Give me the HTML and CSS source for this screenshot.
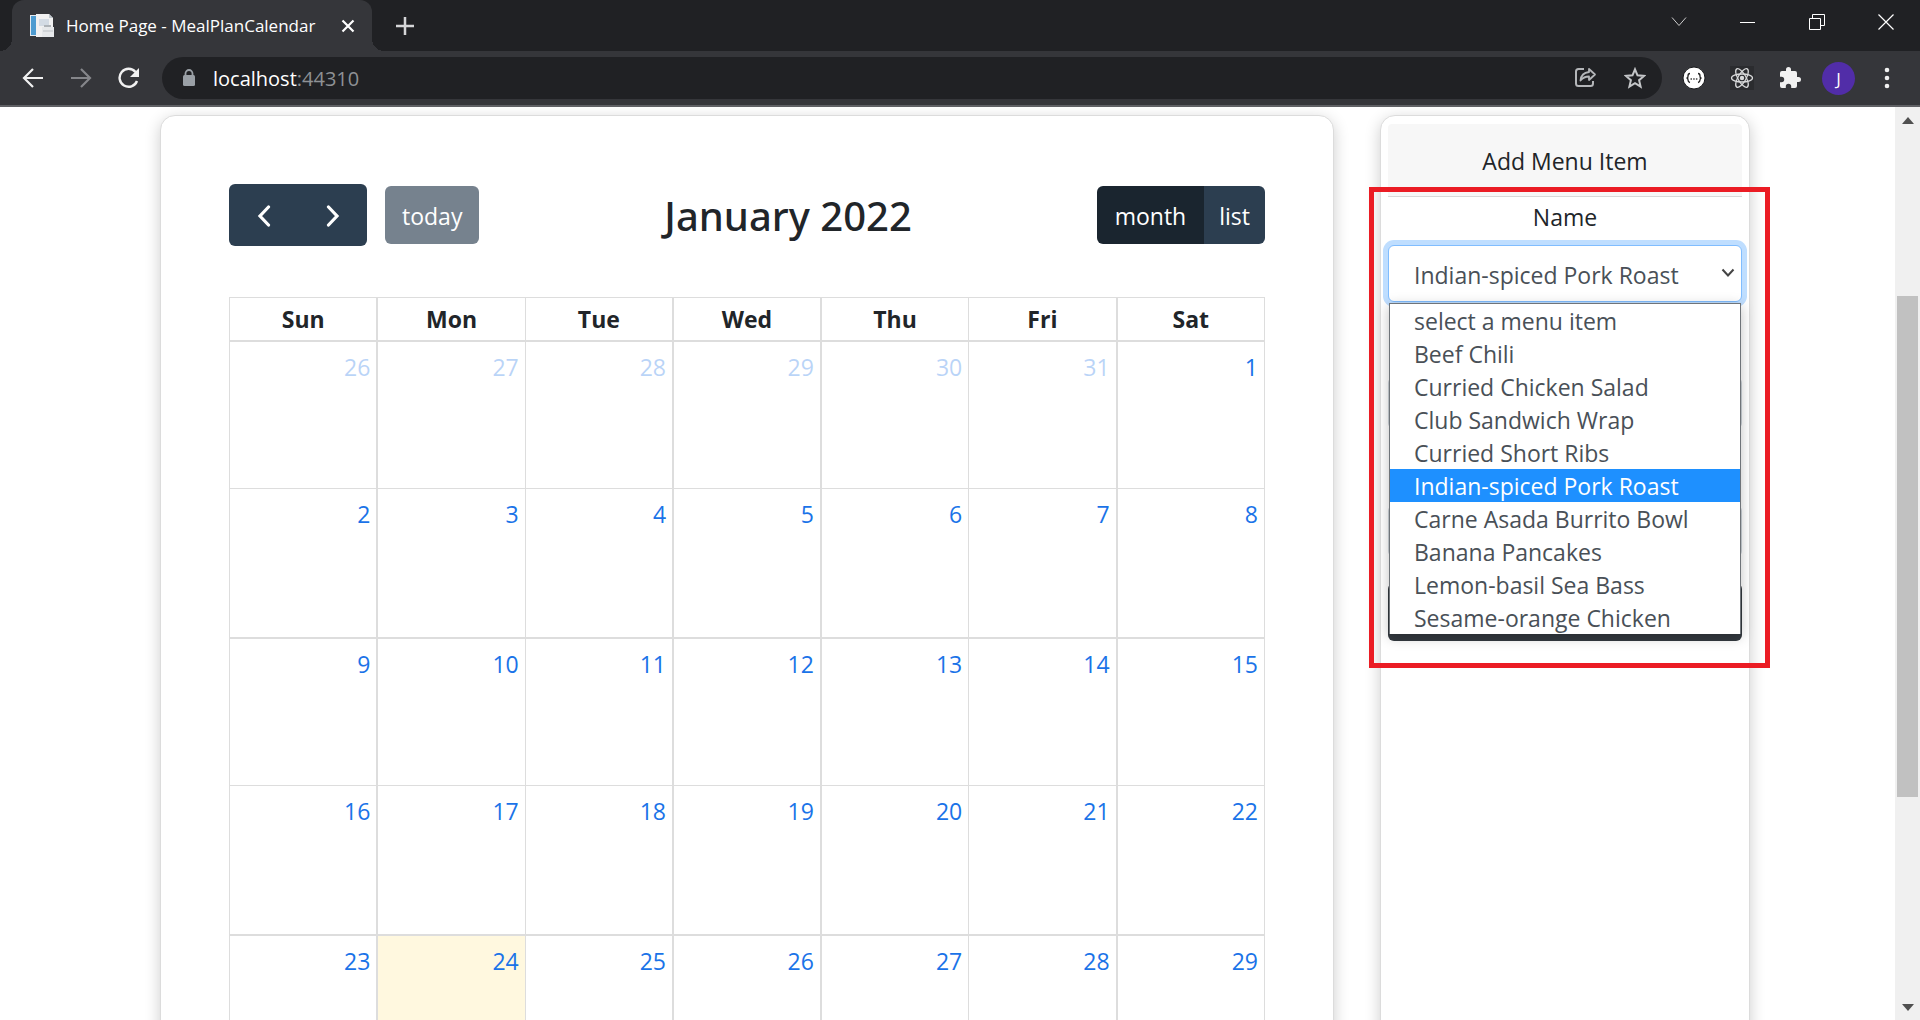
FILE: index.html
```html
<!DOCTYPE html>
<html lang="en">
<head>
<meta charset="utf-8">
<title>Home Page - MealPlanCalendar</title>
<link rel="stylesheet" href="styles.css">
</head>
<body>
<header class="browser">
  <div class="tabstrip">
    <div class="tab">
      <svg class="favicon" width="24" height="24" viewBox="0 0 24 24"><path d="M0 1h9v21H0z" fill="#e4eaf0"/><path d="M1 2h5v19H1z" fill="#4d9bd0"/><path d="M6 0h13l4 4v19H6z" fill="#f1f1f1"/><path d="M9 5h10v7H9z" fill="#d3dbe4"/><path d="M19 0v4h4" fill="#bfc6cc"/><path d="M14 11h7v4h-7z" fill="#aeb3b8"/><path d="M12 13h12v10H12z" fill="#e6e8ea"/><path d="M13 17h10" stroke="#bcc0c4"/></svg>
      <span class="tab-title">Home Page - MealPlanCalendar</span>
      <button class="plain" aria-label="Close tab"><svg width="14" height="14" viewBox="0 0 14 14"><path d="M1.500 1.500l11 11m0-11l-11 11" stroke="#fff" stroke-width="2.200"/></svg></button>
    </div>
    <button class="plain new-tab" aria-label="New tab"><svg width="18" height="18" viewBox="0 0 18 18"><path d="M9 0v18M0 9h18" stroke="#d5d6d8" stroke-width="2.500"/></svg></button>
    <div class="window-buttons">
      <button class="plain" aria-label="Search tabs"><svg width="16" height="16" viewBox="0 0 16 16"><path d="M1 3.500l7 8 7-8" fill="none" stroke="#ccc"/></svg></button>
      <button class="plain" aria-label="Minimize"><svg width="16" height="16" viewBox="0 0 16 16"><path d="M0 8.500h15" stroke="#fff"/></svg></button>
      <button class="plain" aria-label="Restore"><svg width="16" height="16" viewBox="0 0 16 16"><path d="M.5 4.500h11v11H.5zM3.500 4.500v-4h12v11h-4" fill="none" stroke="#fff"/></svg></button>
      <button class="plain" aria-label="Close window"><svg width="16" height="16" viewBox="0 0 16 16"><path d="M.5.5l15 15m0-15l-15 15" stroke="#fff" stroke-width="1.200"/></svg></button>
    </div>
  </div>
  <div class="toolbar">
    <div class="nav-buttons">
      <button class="plain" aria-label="Back"><svg width="22" height="22" viewBox="0 0 22 22"><path d="M21 11H2m9-9l-9 9 9 9" fill="none" stroke="#f1f1f1" stroke-width="2.200"/></svg></button>
      <button class="plain" aria-label="Forward"><svg width="22" height="22" viewBox="0 0 22 22"><path d="M1 11h19m-9-9l9 9-9 9" fill="none" stroke="#85868a" stroke-width="2.200"/></svg></button>
      <button class="plain" aria-label="Reload"><svg width="22" height="22" viewBox="0 0 22 22"><path d="M17.500 5A9 9 0 1 0 19 14" fill="none" stroke="#f1f1f1" stroke-width="2.400"/><path d="M21 1v9h-9z" fill="#f1f1f1"/></svg></button>
    </div>
    <div class="omnibox">
      <svg width="14" height="18" viewBox="0 0 14 18"><rect x="1" y="6" width="12" height="11" rx="1.500" fill="#9aa0a6"/><path d="M3.500 7V4.500a3.500 3.500 0 0 1 7 0V7" fill="none" stroke="#9aa0a6" stroke-width="1.800"/></svg>
      <a class="address" href="#">localhost<span class="port">:44310</span></a>
      <button class="plain" aria-label="Share"><svg width="24" height="22" viewBox="0 0 24 22"><path d="M10 2H4.500Q2 2 2 4.500v12Q2 19 4.500 19h12q2.500 0 2.500-2.500V14" fill="none" stroke="#b4b6b9" stroke-width="2"/><path d="M15 2l6 5.500-6 5.500v-3.500c-4 0-6.500 1.500-8.500 4C7 8.500 10 5.500 15 5z" fill="none" stroke="#b4b6b9" stroke-width="1.800" stroke-linejoin="round"/></svg></button>
      <button class="plain" aria-label="Bookmark"><svg width="22" height="22" viewBox="0 0 22 22"><path d="M11 2.300l2.500 6 6.500.6-4.900 4.300 1.500 6.400-5.600-3.400-5.600 3.400 1.500-6.400L2 8.900l6.500-.6z" fill="none" stroke="#c4c6c8" stroke-width="2"/></svg></button>
    </div>
    <div class="extensions">
      <button class="plain" aria-label="JSON viewer"><svg width="24" height="24" viewBox="0 0 24 24"><circle cx="12" cy="12" r="11" fill="#fff" stroke="#17181a"/><path d="M8 7.500q-2 0-2 2.500t-1.500 2q1.500 0 1.500 2t2 2.500M16 7.500q2 0 2 2.500t1.500 2q-1.500 0-1.500 2t-2 2.500" fill="none" stroke="#222" stroke-width="1.300"/><path d="M8.500 13h1.500m1.200 0h1.500m1.200 0h1.500" stroke="#444" stroke-width="1.500"/></svg></button>
      <button class="plain" aria-label="React tools"><svg width="24" height="24" viewBox="0 0 24 24"><rect width="24" height="24" fill="#2b2c2f"/><g fill="none" stroke="#d9dadb" stroke-width="1.300"><ellipse cx="12" cy="12" rx="10.500" ry="4"/><ellipse cx="12" cy="12" rx="10.500" ry="4" transform="rotate(60 12 12)"/><ellipse cx="12" cy="12" rx="10.500" ry="4" transform="rotate(120 12 12)"/></g><circle cx="12" cy="12" r="2.200" fill="#d9dadb"/></svg></button>
      <button class="plain" aria-label="Extensions"><svg width="24" height="24" viewBox="0 0 24 24"><path d="M20.500 11H19V7a2 2 0 0 0-2-2h-4V3.500a2.500 2.500 0 0 0-5 0V5H4a2 2 0 0 0-2 2v3.800h1.500a2.700 2.700 0 0 1 0 5.400H2V20a2 2 0 0 0 2 2h3.800v-1.500a2.700 2.700 0 0 1 5.400 0V22H17a2 2 0 0 0 2-2v-4h1.500a2.500 2.500 0 0 0 0-5z" fill="#f1f1f1"/></svg></button>
      <button class="plain avatar" aria-label="Profile">J</button>
      <button class="plain" aria-label="Menu"><svg width="24" height="24" viewBox="0 0 24 24"><g fill="#f1f1f1"><circle cx="12" cy="4" r="2.300"/><circle cx="12" cy="12" r="2.300"/><circle cx="12" cy="20" r="2.300"/></g></svg></button>
    </div>
  </div>
</header>

<div class="viewport">
  <main class="page">
    <section class="card calendar-card">
      <div class="calendar-head">
        <div class="head-group">
          <div class="btn-group">
            <button class="btn step" aria-label="Previous"><svg width="16" height="22" viewBox="0 0 16 22"><path d="M12.500 2L4 11l8.500 9" fill="none" stroke="#fff" stroke-width="3.200" stroke-linecap="round"/></svg></button>
            <button class="btn step" aria-label="Next"><svg width="16" height="22" viewBox="0 0 16 22"><path d="M3.500 2L12 11l-8.500 9" fill="none" stroke="#fff" stroke-width="3.200" stroke-linecap="round"/></svg></button>
          </div>
          <button class="btn today">today</button>
        </div>
        <h2 class="month-title">January 2022</h2>
        <div class="btn-group">
          <button class="btn active">month</button>
          <button class="btn">list</button>
        </div>
      </div>
      <table class="month">
        <thead><tr><th scope="col">Sun</th><th scope="col">Mon</th><th scope="col">Tue</th><th scope="col">Wed</th><th scope="col">Thu</th><th scope="col">Fri</th><th scope="col">Sat</th></tr></thead>
        <tbody>
          <tr><td class="other"><a href="#">26</a></td><td class="other"><a href="#">27</a></td><td class="other"><a href="#">28</a></td><td class="other"><a href="#">29</a></td><td class="other"><a href="#">30</a></td><td class="other"><a href="#">31</a></td><td><a href="#">1</a></td></tr>
          <tr><td><a href="#">2</a></td><td><a href="#">3</a></td><td><a href="#">4</a></td><td><a href="#">5</a></td><td><a href="#">6</a></td><td><a href="#">7</a></td><td><a href="#">8</a></td></tr>
          <tr><td><a href="#">9</a></td><td><a href="#">10</a></td><td><a href="#">11</a></td><td><a href="#">12</a></td><td><a href="#">13</a></td><td><a href="#">14</a></td><td><a href="#">15</a></td></tr>
          <tr><td><a href="#">16</a></td><td><a href="#">17</a></td><td><a href="#">18</a></td><td><a href="#">19</a></td><td><a href="#">20</a></td><td><a href="#">21</a></td><td><a href="#">22</a></td></tr>
          <tr><td><a href="#">23</a></td><td class="current"><a href="#">24</a></td><td><a href="#">25</a></td><td><a href="#">26</a></td><td><a href="#">27</a></td><td><a href="#">28</a></td><td><a href="#">29</a></td></tr>
        </tbody>
      </table>
    </section>

    <aside class="card menu-card">
      <h3 class="menu-title">Add Menu Item</h3>
      <form class="menu-form">
        <label for="item">Name</label>
        <div class="picker">
          <select id="item"><option>Indian-spiced Pork Roast</option></select>
          <svg class="caret" width="14" height="10" viewBox="0 0 14 10"><path d="M1.500 1.500L7 7.500l5.500-6" fill="none" stroke="#444" stroke-width="2"/></svg>
          <ul class="options" role="listbox" aria-label="Name">
            <li role="option">select a menu item</li>
            <li role="option">Beef Chili</li>
            <li role="option">Curried Chicken Salad</li>
            <li role="option">Club Sandwich Wrap</li>
            <li role="option">Curried Short Ribs</li>
            <li role="option" class="selected" aria-selected="true">Indian-spiced Pork Roast</li>
            <li role="option">Carne Asada Burrito Bowl</li>
            <li role="option">Banana Pancakes</li>
            <li role="option">Lemon-basil Sea Bass</li>
            <li role="option">Sesame-orange Chicken</li>
          </ul>
        </div>
        <input class="field" type="text" aria-label="Start">
        <input class="field" type="text" aria-label="End">
        <button class="submit" type="button" aria-label="Add"></button>
      </form>
      <div class="highlight"></div>
    </aside>
  </main>
  <div class="scrollbar">
    <svg width="12" height="7" viewBox="0 0 12 7"><path d="M0 7l6-7 6 7z" fill="#505050"/></svg>
    <div class="track"><div class="thumb"></div></div>
    <svg width="12" height="7" viewBox="0 0 12 7"><path d="M0 0l6 7 6-7z" fill="#505050"/></svg>
  </div>
</div>
</body>
</html>
```
FILE: styles.css
```css
* { box-sizing: border-box; }

body {
  margin: 0;
  height: 100vh;
  overflow: hidden;
  display: flex;
  flex-direction: column;
  background: #fff;
  color: #212529;
  font-family: "Open Sans", "Noto Sans", sans-serif;
  font-size: 23px;
}

button, select, input { font: inherit; }

.plain {
  display: flex;
  align-items: center;
  justify-content: center;
  padding: 0;
  border: 0;
  background: none;
  color: #fff;
}

/* Browser frame */
.browser {
  flex: none;
  background: #35363a;
  border-bottom: 2px solid #5f6064;
}

.tabstrip {
  display: flex;
  align-items: center;
  height: 51px;
  padding-left: 12px;
  background: #202124;
}

.tab {
  position: relative;
  display: flex;
  align-items: center;
  width: 360px;
  height: 51px;
  padding: 0 17px 0 18px;
  border-radius: 12px 12px 0 0;
  background: #35363a;
  color: #fff;
}

.tab::before,
.tab::after {
  content: "";
  position: absolute;
  bottom: 0;
  width: 12px;
  height: 12px;
}

.tab::before { right: 100%; background: radial-gradient(circle at 0 0, #202124 12px, #35363a 12px); }
.tab::after { left: 100%; background: radial-gradient(circle at 100% 0, #202124 12px, #35363a 12px); }

.tab-title {
  flex: 1;
  padding-left: 12px;
  font-size: 17px;
  white-space: nowrap;
}

.new-tab { margin-left: 24px; }

.window-buttons {
  display: flex;
  gap: 53px;
  margin-left: auto;
  padding: 0 26px 8px 0;
}

.toolbar {
  display: flex;
  align-items: center;
  height: 54px;
  padding: 0 21px 0 22px;
}

.nav-buttons { display: flex; gap: 26px; width: 140px; }

.omnibox {
  flex: 1;
  display: flex;
  align-items: center;
  gap: 26px;
  height: 42px;
  padding: 0 16px 0 20px;
  border-radius: 21px;
  background: #202124;
}

.address {
  flex: 1;
  margin-left: -9px;
  color: #fff;
  font-size: 20px;
  text-decoration: none;
}

.port { color: #8e9195; }

.extensions { display: flex; align-items: center; gap: 24px; padding-left: 20px; }

.avatar {
  width: 33px;
  height: 33px;
  margin: 0 -4px;
  border-radius: 50%;
  background: #512da8;
  font-size: 17px;
}

/* Page area */
.viewport { flex: 1; display: flex; min-height: 0; }

.page {
  flex: 1;
  display: grid;
  grid-template-columns: 1174fr 370fr;
  gap: 46px;
  padding: 8px 145px 0 160px;
  overflow: hidden;
}

.card {
  border: 1px solid #dcdcdc;
  border-radius: 15px;
  background: #fff;
  box-shadow: 0 4px 16px rgba(0, 0, 0, .2);
}

.calendar-card { padding: 68px 68px 0; }

.calendar-head {
  display: flex;
  align-items: center;
  justify-content: space-between;
  height: 62px;
  margin-bottom: 51px;
}

.head-group { display: flex; align-items: center; gap: 18px; }
.btn-group { display: flex; }

.btn {
  height: 58px;
  padding: 2px 15px 0;
  border: 0;
  background: #2c3e50;
  color: #fff;
}

.btn.step { display: flex; align-items: center; justify-content: center; width: 69px; height: 62px; }
.btn.today { border-radius: 6px; background: #76828e; padding: 2px 17px 0; }
.btn.active { background: #1a252f; padding: 2px 18px 0; }
.btn-group .btn:first-child { border-radius: 6px 0 0 6px; }
.btn-group .btn:last-child { border-radius: 0 6px 6px 0; }

.month-title {
  margin: 0;
  font-family: "Noto Sans", "Open Sans", sans-serif;
  font-size: 40px;
  font-weight: 500;
}

.month {
  width: 100%;
  table-layout: fixed;
  border-collapse: collapse;
  border: 1px solid #ddd;
}

.month th {
  height: 43px;
  padding: 1px 0 0;
  border-right: 2px solid #ddd;
  border-bottom: 2px solid #ddd;
  font-size: 23px;
}

.month td {
  height: 148px;
  padding: 9px 6px 0 0;
  border-right: 2px solid #ddd;
  border-bottom: 1px solid #ddd;
  line-height: 32px;
  text-align: right;
  vertical-align: top;
}

.month tr:nth-child(even) td { height: 149px; border-bottom-width: 2px; }

.month th:nth-child(2), .month td:nth-child(2),
.month th:nth-child(5), .month td:nth-child(5),
.month th:last-child, .month td:last-child { border-right-width: 1px; }

.month a { color: #1a73e8; text-decoration: none; }
.month .other a { opacity: .3; }
.month .current { background: #fff8df; }

/* Menu item form */
.menu-card { position: relative; padding: 8px 7px; }

.menu-title {
  height: 73px;
  margin: 0;
  border-bottom: 1px solid #d8d8d8;
  border-radius: 4px 4px 0 0;
  background: #f7f7f7;
  font-size: 23px;
  font-weight: 400;
  line-height: 74px;
  text-align: center;
}

.menu-form { display: flex; flex-direction: column; text-align: center; }
.menu-form label { height: 48px; line-height: 40px; }

.picker { position: relative; margin-bottom: 75px; }

.picker select {
  display: block;
  width: 100%;
  height: 57px;
  padding: 2px 40px 0 25px;
  border: 1px solid #80bdff;
  border-radius: 6px;
  outline: 0;
  appearance: none;
  background: #fff;
  box-shadow: 0 0 0 5px #bfdeff;
  color: #495057;
}

.caret { position: absolute; top: 23px; right: 7px; }

.options {
  position: absolute;
  z-index: 1;
  top: 58px;
  left: 1px;
  right: 1px;
  margin: 0;
  padding: 0;
  border: 1px solid #6f7479;
  border-bottom: 0;
  background: #fff;
  box-shadow: 0 3px 12px rgba(0, 0, 0, .25);
  list-style: none;
  text-align: left;
}

.options li {
  height: 33px;
  padding-left: 24px;
  color: #495057;
  line-height: 35px;
  white-space: nowrap;
}

.options .selected { background: #1e90ff; color: #fff; }

.field {
  width: 100%;
  height: 52px;
  margin-bottom: 76px;
  border: 1px solid #ced4da;
  border-radius: 6px;
}

.field + .field { margin-bottom: 26px; }

.submit {
  height: 58px;
  border: 0;
  border-radius: 6px;
  background: #343a40;
}

.highlight {
  position: absolute;
  z-index: 2;
  top: 71px;
  left: -12px;
  right: -21px;
  height: 481px;
  border: 5px solid #eb1c24;
}

/* Scroll bar */
.scrollbar {
  flex: none;
  display: flex;
  flex-direction: column;
  align-items: center;
  width: 25px;
  padding: 10px 0 9px;
  background: #f0f0f0;
}

.track { flex: 1; width: 21px; padding: 172px 0 0; }
.thumb { height: 71%; max-height: 501px; background: #c1c1c1; }
```
